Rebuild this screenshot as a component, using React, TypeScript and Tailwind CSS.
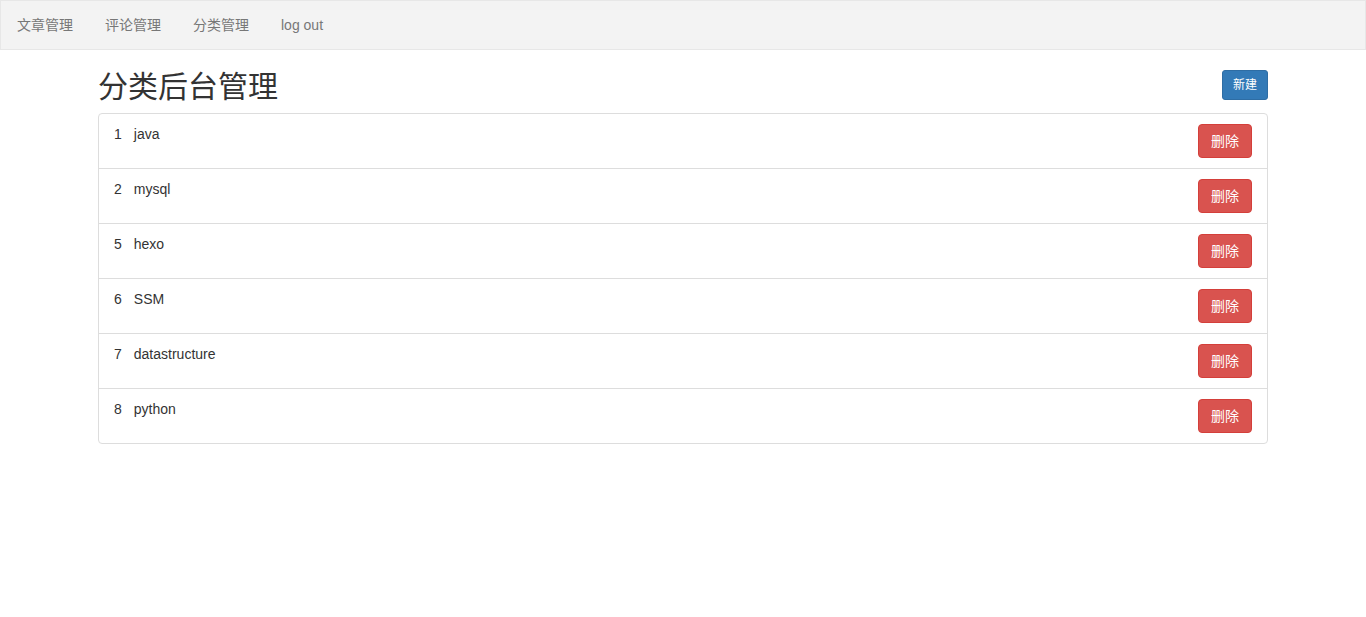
import React from "react";

const categories = [
  { id: 1, name: "java" },
  { id: 2, name: "mysql" },
  { id: 5, name: "hexo" },
  { id: 6, name: "SSM" },
  { id: 7, name: "datastructure" },
  { id: 8, name: "python" },
];

const navLinks = ["文章管理", "评论管理", "分类管理", "log out"];

function App() {
  return (
    <div
      className="min-h-screen bg-white text-[14px] leading-[20px] text-[#333]"
      style={{ fontFamily: '"Liberation Sans", "Noto Sans CJK SC", sans-serif' }}
    >
      {/* Navbar */}
      <nav className="flex h-[50px] border border-[#e7e7e7] bg-[#f3f3f3]">
        {navLinks.map((link) => (
          <a
            key={link}
            href="#"
            className="px-4 py-[14px] leading-[20px] text-[#777] hover:text-[#333]"
          >
            {link}
          </a>
        ))}
      </nav>

      <div className="mx-auto w-[1170px]">
        {/* Header */}
        <div className="mt-5 flex items-start justify-between">
          <h1 className="mb-[10px] text-[30px] leading-[33px] font-normal">
            分类后台管理
          </h1>
          <button className="h-[30px] rounded-[3px] border border-[#2e6da4] bg-[#337ab7] px-[10px] text-[12px] leading-[18px] text-white">
            新建
          </button>
        </div>

        {/* List */}
        <ul className="rounded border border-[#ddd]">
          {categories.map((c, i) => (
            <li
              key={c.id}
              className={`flex items-start justify-between px-[15px] py-[10px] ${
                i > 0 ? "border-t border-[#ddd]" : ""
              }`}
            >
              <div className="leading-[20px]">
                <span className="mr-[12px]">{c.id}</span>
                <span>{c.name}</span>
              </div>
              <button className="h-[34px] rounded border border-[#d43f3a] bg-[#d9534f] px-3 text-[14px] leading-[20px] text-white">
                删除
              </button>
            </li>
          ))}
        </ul>
      </div>
    </div>
  );
}

export default App;
